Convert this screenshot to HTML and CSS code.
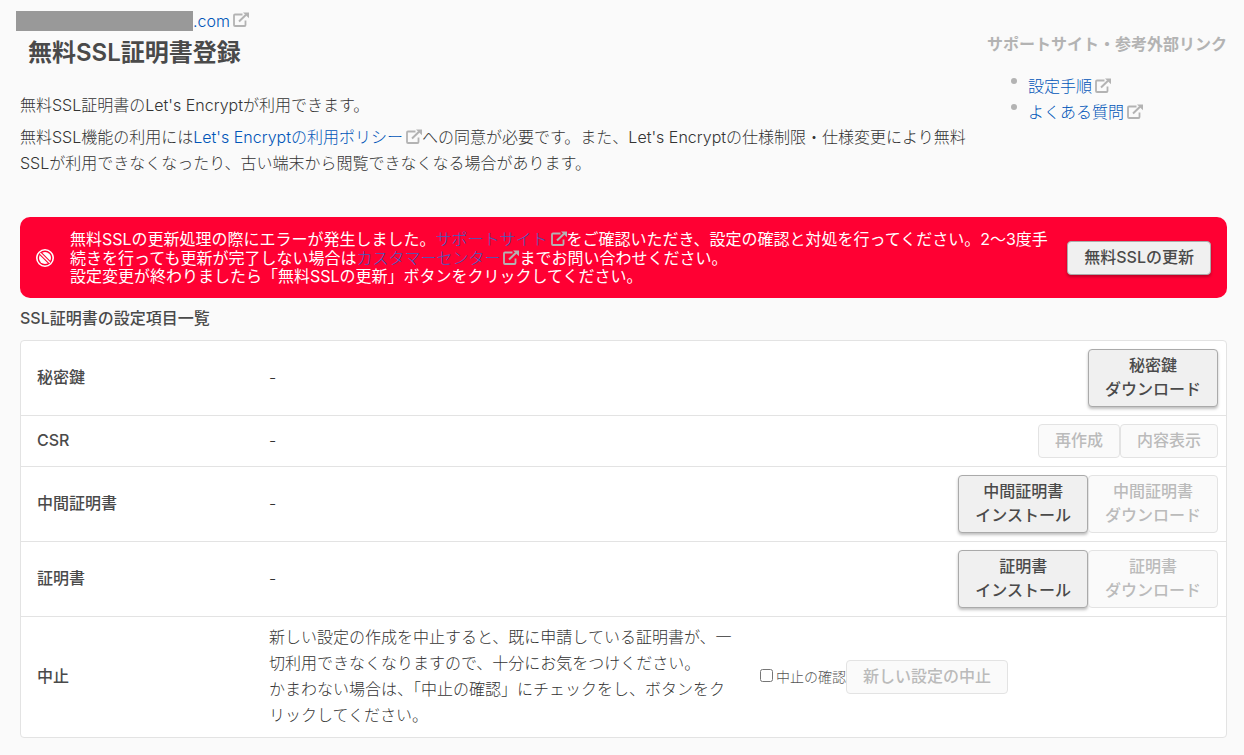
FILE: index.html
```html
<!DOCTYPE html>
<html lang="ja">
<head>
<meta charset="utf-8">
<meta name="viewport" content="width=device-width, initial-scale=1">
<title>無料SSL証明書登録</title>
<link rel="stylesheet" href="styles.css">
</head>
<body>
<svg class="sprite" aria-hidden="true">
  <symbol id="external" viewBox="0 0 16 15">
    <path d="M9.5 2.5H2Q1 2.500 1 3.500V13Q1 14 2 14H11.500Q12.500 14 12.500 13V8.500" fill="none" stroke="currentColor" stroke-width="1.8"/>
    <path d="M6 9.500L13 2.800" fill="none" stroke="currentColor" stroke-width="2"/>
    <path d="M10 0.500H16V6.300Z" fill="currentColor"/>
  </symbol>
</svg>
<header class="header">
  <div class="intro">
    <a class="domain" href="#"><span class="mask"></span>.com<svg class="ext ext-gap" aria-hidden="true"><use href="#external"/></svg></a>
    <h1 class="title">無料SSL証明書登録</h1>
    <p class="lead">無料SSL証明書のLet's Encryptが利用できます。</p>
    <p class="lead">無料SSL機能の利用には<a href="#">Let's Encryptの利用ポリシー<svg class="ext ext-gap" aria-hidden="true"><use href="#external"/></svg></a>への同意が必要です。また、Let's Encryptの仕様制限・仕様変更により無料SSLが利用できなくなったり、古い端末から閲覧できなくなる場合があります。</p>
  </div>
  <aside class="support">
    <h2 class="support-title">サポートサイト・参考外部リンク</h2>
    <ul class="links">
      <li><a href="#">設定手順<svg class="ext" aria-hidden="true"><use href="#external"/></svg></a></li>
      <li><a href="#">よくある質問<svg class="ext" aria-hidden="true"><use href="#external"/></svg></a></li>
    </ul>
  </aside>
</header>
<main class="main">
  <section class="alert" role="alert">
    <svg class="ban" viewBox="0 0 18 18" aria-hidden="true">
      <circle cx="9" cy="9" r="8.200" fill="none" stroke="#fff" stroke-width="1.600"/>
      <circle cx="9" cy="9" r="6" fill="#fff"/>
      <path d="M4.500 4.500L13.500 13.500" stroke="#ff0033" stroke-width="3.600"/>
      <path d="M4.200 4.200L13.800 13.800" stroke="#fff" stroke-width="1.400"/>
    </svg>
    <div class="alert-text">
      <p class="alert-main">無料SSLの更新処理の際にエラーが発生しました。<a href="#">サポートサイト<svg class="ext ext-gap" aria-hidden="true"><use href="#external"/></svg></a>をご確認いただき、設定の確認と対処を行ってください。2～3度手続きを行っても更新が完了しない場合は<a href="#">カスタマーセンター<svg class="ext ext-gap" aria-hidden="true"><use href="#external"/></svg></a>までお問い合わせください。</p>
      <p class="alert-sub">設定変更が終わりましたら「無料SSLの更新」ボタンをクリックしてください。</p>
    </div>
    <button class="btn" type="button">無料SSLの更新</button>
  </section>
  <h2 class="section-title">SSL証明書の設定項目一覧</h2>
  <table class="settings">
    <tbody>
      <tr>
        <th scope="row">秘密鍵</th>
        <td>-</td>
        <td><div class="actions"><button class="btn" type="button">秘密鍵<br>ダウンロード</button></div></td>
      </tr>
      <tr>
        <th scope="row">CSR</th>
        <td>-</td>
        <td><div class="actions"><button class="btn" type="button" disabled>再作成</button><button class="btn" type="button" disabled>内容表示</button></div></td>
      </tr>
      <tr>
        <th scope="row">中間証明書</th>
        <td>-</td>
        <td><div class="actions"><button class="btn" type="button">中間証明書<br>インストール</button><button class="btn" type="button" disabled>中間証明書<br>ダウンロード</button></div></td>
      </tr>
      <tr>
        <th scope="row">証明書</th>
        <td>-</td>
        <td><div class="actions"><button class="btn" type="button">証明書<br>インストール</button><button class="btn" type="button" disabled>証明書<br>ダウンロード</button></div></td>
      </tr>
      <tr>
        <th scope="row">中止</th>
        <td>新しい設定の作成を中止すると、既に申請している証明書が、一切利用できなくなりますので、十分にお気をつけください。<br>かまわない場合は、「中止の確認」にチェックをし、ボタンをクリックしてください。</td>
        <td><div class="actions actions-start"><input class="check" type="checkbox" id="confirm"><label class="check-label" for="confirm">中止の確認</label><button class="btn" type="button" disabled>新しい設定の中止</button></div></td>
      </tr>
    </tbody>
  </table>
</main>
</body>
</html>
```

FILE: styles.css
```css
* {
  box-sizing: border-box;
}

body {
  margin: 0;
  padding: 8px 17px 17px 20px;
  background: #fafafa;
  color: #333;
  font-family: Inter, "Noto Sans CJK JP", sans-serif;
  font-size: 16px;
  font-weight: 300;
  line-height: 26px;
}

h1, h2, p, ul {
  margin: 0;
  padding: 0;
}

a {
  color: #0055b8;
  text-decoration: none;
}

.sprite {
  display: none;
}

.ext {
  width: 16px;
  height: 15px;
  margin-left: 3px;
  color: #b3b3b3;
  vertical-align: -1px;
}

.header {
  display: flex;
  gap: 16px;
  align-items: flex-start;
}

.intro {
  flex: 1;
  min-width: 0;
}

.domain {
  display: flex;
  align-items: center;
  margin-left: -4px;
}

.domain .ext {
  margin-bottom: 3px;
}

.mask {
  width: 177px;
  height: 20px;
  background: #999;
}

.title {
  margin: 2px 8px 22px;
  color: #4a4a4a;
  font-size: 24px;
  font-weight: 600;
  line-height: 34px;
}

.lead + .lead {
  margin-top: 6px;
}

.support {
  padding-top: 23px;
}

.support-title {
  color: #b3b3b3;
  font-size: 16px;
  font-weight: 600;
  line-height: 26px;
}

.links {
  margin-top: 16px;
  padding-left: 24px;
  list-style: none;
}

.links li {
  display: flex;
  gap: 11px;
}

.links li::before {
  content: "";
  width: 6px;
  height: 6px;
  margin-top: 5px;
  border-radius: 50%;
  background: #b3b3b3;
}

.alert {
  display: flex;
  align-items: center;
  gap: 16px;
  margin-top: 41px;
  padding: 13px 16px;
  border-radius: 10px;
  background: #ff0033;
  color: #fff;
  font-weight: 400;
}

.ban {
  flex: none;
  width: 18px;
  height: 18px;
}

.alert-text {
  flex: 1;
}

.alert-main {
  line-height: 19px;
}

.alert-sub {
  line-height: 17px;
}

.alert a {
  color: #3f5fc0;
  font-weight: 300;
}

.section-title {
  margin: 7px 0 9px;
  color: #4a4a4a;
  font-size: 16px;
  font-weight: 500;
  line-height: 26px;
}

.settings {
  width: 100%;
  table-layout: fixed;
  border: 1px solid #e3e3e3;
  border-radius: 4px;
  border-spacing: 0;
  background: #fff;
}

.settings th,
.settings td {
  padding: 7px 8px 9px 16px;
  border-bottom: 1px solid #e3e3e3;
  text-align: left;
  vertical-align: middle;
}

.settings td:last-child {
  padding: 8px 8px 8px 16px;
}

.settings tr:last-child > * {
  border-bottom: 0;
}

.settings th {
  width: 232px;
  color: #4a4a4a;
  font-weight: 500;
}

.settings td:nth-child(2) {
  width: 491px;
}

.actions {
  display: flex;
  align-items: center;
  justify-content: flex-end;
}

.actions-start {
  justify-content: flex-start;
}

.btn {
  flex: none;
  padding: 3px 16px 5px;
  border: 1px solid #aaa;
  border-radius: 4px;
  background: #f0f0f0;
  box-shadow: 0 2px 3px rgba(0, 0, 0, 0.25);
  color: #4a4a4a;
  font: inherit;
  font-weight: 500;
  line-height: 24px;
}

.btn:disabled {
  border-color: #e3e3e3;
  background: #fafafa;
  box-shadow: none;
  color: #bbb;
}

.check {
  width: 13px;
  height: 13px;
  margin: 0 3px 4px 0;
}

.check-label {
  color: #555;
  font-size: 14px;
}
```
